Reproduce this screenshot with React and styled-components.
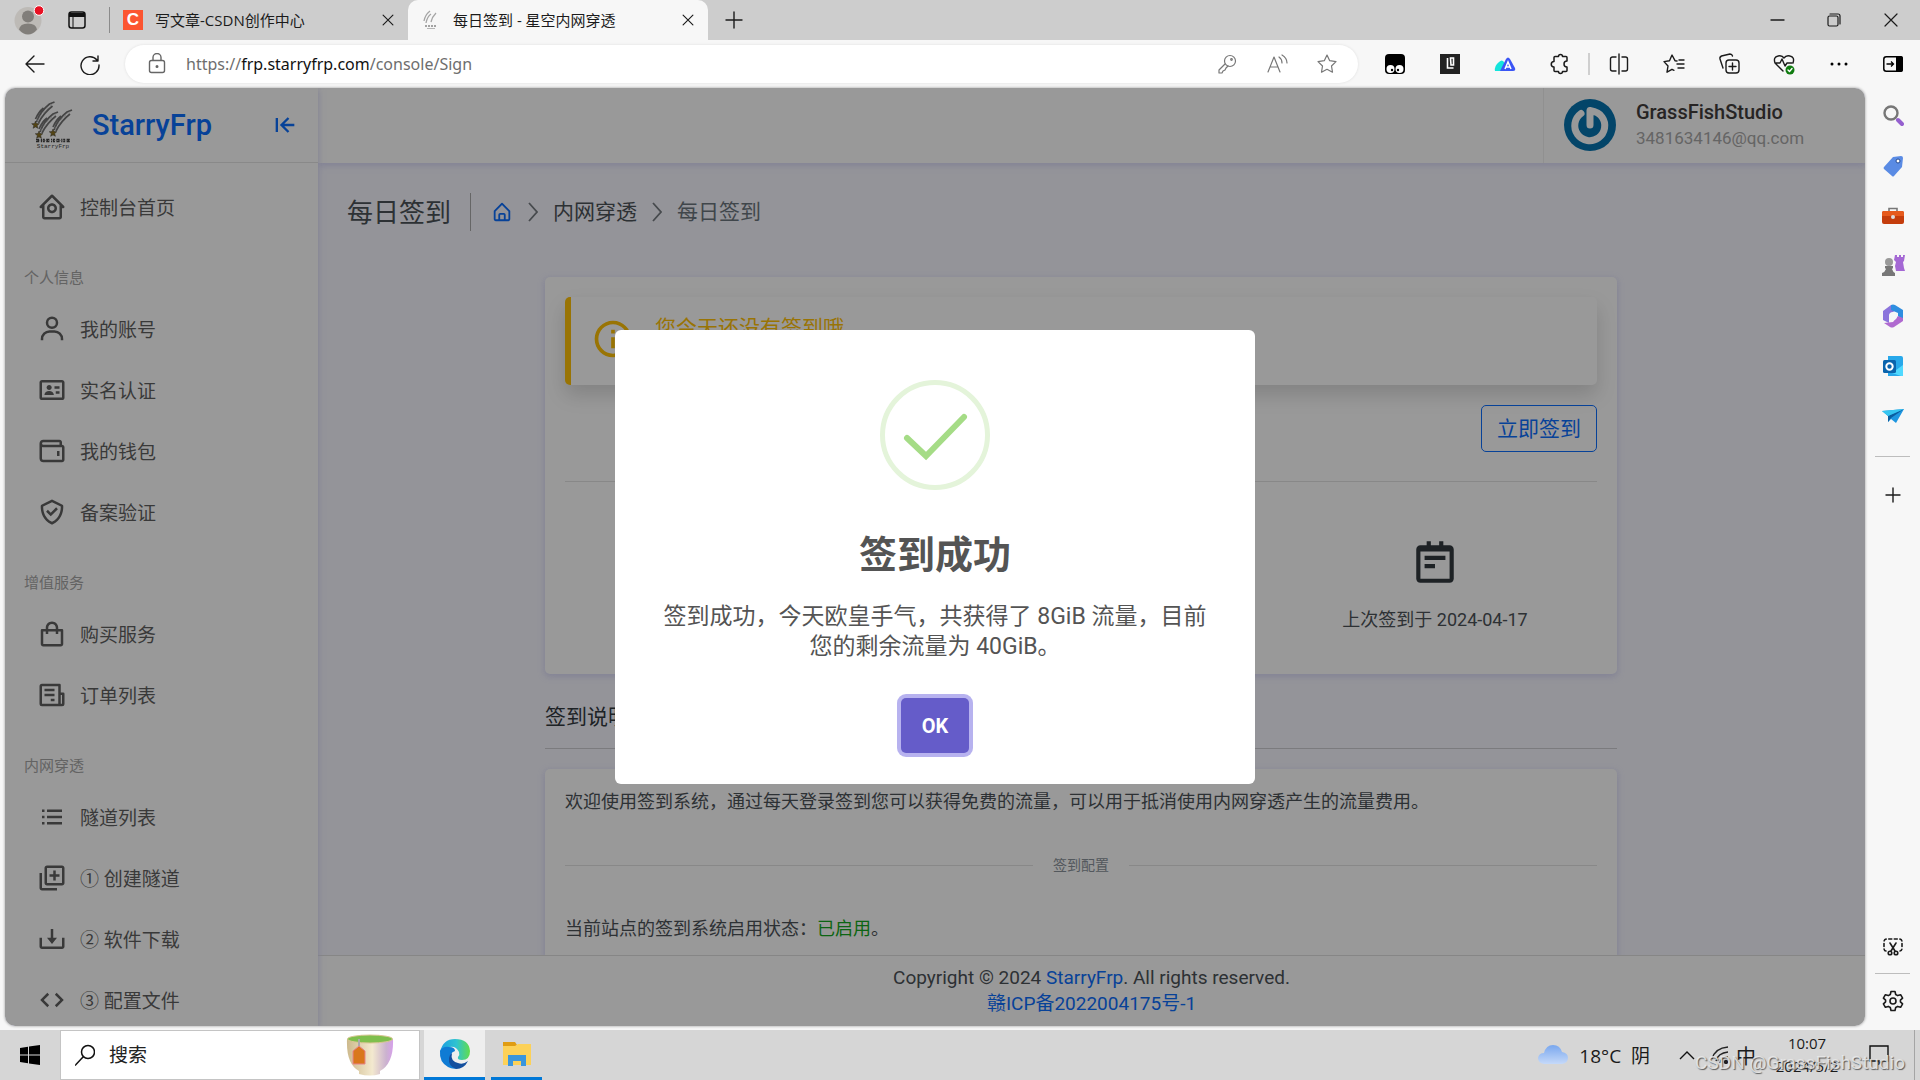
import React from "react";
import styled, { createGlobalStyle, css } from "styled-components";
import {
  BiHomeCircle, BiUser, BiIdCard, BiWallet, BiCheckShield, BiShoppingBag, BiListUl,
  BiAddToQueue, BiDownload, BiCode, BiArrowToLeft, BiHomeAlt, BiInfoCircle, BiNotepad,
} from "react-icons/bi";

const siteFont = '"Roboto", "Noto Sans CJK SC", sans-serif';
const chromeFont = '"Open Sans", "Noto Sans CJK SC", sans-serif';
const violetShadow = "0 2px 6px 0 rgba(218, 218, 253, 0.65), 0 2px 6px 0 rgba(206, 206, 238, 0.54)";

const GlobalStyle = createGlobalStyle`
  *, *::before, *::after { box-sizing: border-box; }
  body { margin: 0; font-family: ${chromeFont}; color: #1b1b1b; }
  button, input { font: inherit; color: inherit; }
  button { background: none; border: 0; padding: 0; }
  a { color: inherit; text-decoration: none; }
  h1, h2, p, ul { margin: 0; padding: 0; font-weight: 400; }
  ul { list-style: none; }
  svg { display: block; flex: none; }
`;

/* ---------- window frame ---------- */
const Screen = styled.div`
  display: flex;
  flex-direction: column;
  height: 100vh;
  overflow: hidden;
  background: #f7f7f7;
`;
const TabStrip = styled.header`
  display: flex;
  align-items: center;
  height: 40px;
  flex: none;
  background: #cdcdcd;
`;
const StripTools = styled.div`
  display: flex;
  align-items: center;
  width: 110px;
  height: 26px;
  padding-left: 14px;
  gap: 22px;
  border-right: 1px solid #8b8b8b;
`;
const IconButton = styled.button`
  display: flex;
  align-items: center;
  justify-content: center;
  width: ${(p) => p.$w || 55}px;
  height: 40px;
  flex: none;
  color: ${(p) => p.$color || "#1b1b1b"};
`;
const Tab = styled.div`
  display: flex;
  align-items: center;
  width: ${(p) => (p.$active ? 300 : 298)}px;
  height: 40px;
  padding: 0 12px 0 13px;
  gap: 12px;
  font-size: 15px;
  border-radius: 10px 10px 0 0;
  background: ${(p) => (p.$active ? "#f7f7f7" : "transparent")};
`;
const TabTitle = styled.span`
  flex: 1;
  padding-bottom: 2px;
  white-space: nowrap;
  overflow: hidden;
`;
const CsdnBadge = styled.span`
  width: 20px;
  height: 20px;
  background: #fc5531;
  color: #fff;
  font: 700 17px/20px "Liberation Sans", sans-serif;
  text-align: center;
`;
const Spacer = styled.div`
  flex: 1;
`;
const Toolbar = styled.div`
  display: flex;
  align-items: center;
  height: 48px;
  flex: none;
  padding-left: 7px;
`;
const AddressBar = styled.div`
  display: flex;
  align-items: center;
  flex: 1;
  height: 38px;
  margin: 0 9px 0 8px;
  padding: 0 6px 0 7px;
  border-radius: 19px;
  background: #fff;
  box-shadow: 0 0 3px rgba(0, 0, 0, 0.1);
`;
const UrlField = styled.label`
  display: grid;
  align-items: center;
  flex: 1;
  padding-left: 4px;
  font: 16px/24px "Noto Sans", "Noto Sans CJK SC", sans-serif;
  color: #6e6e6e;
  & > * { grid-area: 1 / 1; }
  b { font-weight: 400; color: #111; }
`;
const UrlInput = styled.input`
  width: 100%;
  border: 0;
  outline: 0;
  padding: 0;
  background: none;
`;
const ToolDivider = styled.span`
  width: 2px;
  height: 22px;
  margin: 0 1px;
  background: #cfcfcf;
`;
const Body = styled.div`
  display: flex;
  flex: 1;
  min-height: 0;
  padding: 0 0 4px 5px;
`;
const EdgeRail = styled.aside`
  display: flex;
  flex-direction: column;
  align-items: center;
  width: 55px;
  flex: none;
  padding: 3px 0 0;
`;
const RailButton = styled(IconButton)`
  height: 50px;
`;
const RailRule = styled.span`
  width: 35px;
  height: 1px;
  background: #bdbdbd;
  margin: ${(p) => (p.$top ? "15px 0 13px" : "2px 0")};
`;

/* ---------- web page ---------- */
const Page = styled.div`
  position: relative;
  display: flex;
  flex: 1;
  min-width: 0;
  border-radius: 10px;
  overflow: hidden;
  background: #f7f7ff;
  box-shadow: 0 0 3px rgba(0, 0, 0, 0.4);
  font-family: ${siteFont};
  color: #4c5258;
`;
const SideShell = styled.div`
  display: flex;
  flex: none;
  background: #fff;
  box-shadow: ${violetShadow};
  z-index: 2;
`;
const SideNav = styled.nav`
  width: 313px;
  overflow: hidden;
`;
const Brand = styled.div`
  display: flex;
  align-items: center;
  height: 75px;
  padding: 0 19px 0 26px;
  border-bottom: 1px solid #e4e4e4;
  color: #0d6efd;
`;
const BrandName = styled.span`
  flex: 1;
  margin-left: 17px;
  font-size: 29px;
  font-weight: 500;
`;
const NavList = styled.ul`
  padding-top: 13px;
`;
const NavLink = styled.a`
  display: flex;
  align-items: center;
  gap: 13px;
  height: 61px;
  padding-left: 32px;
  font-size: 19px;
  color: #5f5f5f;
  white-space: nowrap;
`;
const NavLabel = styled.li`
  height: 61px;
  padding: 22px 0 0 19px;
  font-size: 15px;
  line-height: 39px;
  color: #a6a6a6;
`;
const Main = styled.main`
  display: flex;
  flex-direction: column;
  flex: 1;
  min-width: 0;
`;
const TopBar = styled.div`
  display: flex;
  justify-content: flex-end;
  height: 75px;
  flex: none;
  background: #fff;
  box-shadow: ${violetShadow};
  z-index: 1;
`;
const UserBox = styled.div`
  display: flex;
  align-items: center;
  width: 322px;
  padding: 0 0 2px 20px;
  gap: 20px;
  border-left: 1px solid #f0f0f0;
  line-height: 26px;
`;
const UserName = styled.div`
  font-size: 20px;
  font-weight: 500;
  color: #413c3c;
`;
const UserMail = styled.div`
  font-size: 17px;
  color: #a9a8a8;
`;
const Content = styled.div`
  flex: 1;
  min-height: 0;
  overflow: hidden;
  padding: 30px 50px 0 29px;
`;
const Crumbs = styled.div`
  display: flex;
  align-items: center;
  height: 38px;
  gap: 15px;
  font-size: 21px;
  color: #6c757d;
`;
const PageTitle = styled.h1`
  display: flex;
  align-items: center;
  height: 38px;
  padding: 0 19px 4px 0;
  margin-right: 5px;
  border-right: 1px solid #aaaaaa;
  font-size: 26px;
  color: #4c5258;
`;
const CrumbText = styled.span`
  padding-bottom: 4px;
`;
const CrumbLink = styled.a`
  color: ${(p) => (p.$home ? "#0d6efd" : "#4c5258")};
`;
const Column = styled.div`
  max-width: 1072px;
  margin: 46px auto 0;
`;
const Card = styled.section`
  padding: 20px;
  border-radius: 5px;
  background: #fff;
  box-shadow: ${violetShadow};
  font-size: 18px;
  line-height: 26px;
`;
const Alert = styled.div`
  display: flex;
  align-items: center;
  gap: 20px;
  height: 88px;
  padding: 16px 20px 20px;
  border-left: 6px solid #ffc107;
  border-radius: 5px;
  background: #fff;
  box-shadow: 0 10px 20px rgba(0, 0, 0, 0.15);
  color: #ffc107;
`;
const AlertText = styled.p`
  align-self: flex-start;
  padding-top: 2px;
  font-size: 21px;
`;
const Actions = styled.div`
  display: flex;
  justify-content: flex-end;
  padding: 20px 0 29px;
  border-bottom: 1px solid #e3e3e3;
`;
const SignButton = styled.button`
  padding: 11px 15px 9px;
  border: 1px solid #0d6efd;
  border-radius: 5px;
  font-size: 21px;
  line-height: 25px;
  color: #0d6efd;
`;
const Stats = styled.div`
  display: grid;
  grid-template-columns: repeat(3, 1fr);
  gap: 30px;
  padding: 55px 0 21px;
`;
const Stat = styled.div`
  grid-column: 3;
  display: flex;
  flex-direction: column;
  align-items: center;
  gap: 20px;
  svg { color: #32393f; }
`;
const SectionTitle = styled.h2`
  margin: 31px 0 20px;
  padding-bottom: 19px;
  border-bottom: 1px solid #cdcdd2;
  font-size: 21px;
  line-height: 24px;
  color: #32393f;
`;
const Divider = styled.div`
  display: flex;
  align-items: center;
  gap: 20px;
  margin: 37px 0 38px;
  font-size: 14px;
  color: #8b939b;
  &::before, &::after {
    content: "";
    flex: 1;
    height: 1px;
    background: #e3e3e3;
  }
`;
const Success = styled.span`
  color: #15a820;
`;
const Footer = styled.footer`
  flex: none;
  padding: 9px;
  border-top: 1px solid #e0e0e0;
  background: #fff;
  text-align: center;
  font-size: 19px;
  line-height: 26px;
  a { color: #0d6efd; }
`;

/* ---------- dialog ---------- */
const Backdrop = styled.div`
  position: absolute;
  inset: 0;
  z-index: 5;
  display: flex;
  align-items: center;
  justify-content: center;
  background: rgba(0, 0, 0, 0.4);
`;
const Dialog = styled.div`
  display: flex;
  flex-direction: column;
  align-items: center;
  width: 640px;
  padding: 50px 40px 31px;
  border-radius: 6px;
  background: #fff;
  color: #545454;
  text-align: center;
`;
const DialogTitle = styled.h2`
  margin: 40px 0 22px;
  font-size: 38px;
  line-height: 50px;
  font-weight: 700;
`;
const DialogText = styled.p`
  font-size: 23px;
  line-height: 30px;
`;
const OkButton = styled.button`
  height: 55px;
  margin-top: 36px;
  padding: 0 21px;
  border-radius: 5px;
  background: #655cc9;
  box-shadow: 0 0 0 4px rgba(112, 102, 224, 0.5);
  color: #fff;
  font-size: 20px;
  font-weight: 700;
`;

/* ---------- taskbar ---------- */
const Taskbar = styled.footer`
  position: relative;
  display: flex;
  align-items: center;
  height: 50px;
  flex: none;
  background: #d6d6d6;
`;
const StartButton = styled(IconButton)`
  width: 60px;
  height: 50px;
`;
const SearchBox = styled.label`
  display: flex;
  align-items: center;
  gap: 14px;
  width: 360px;
  height: 50px;
  padding: 0 25px 0 14px;
  margin-right: 4px;
  border: 1px solid #c4c4c4;
  background: #fff;
`;
const SearchInput = styled.input`
  flex: 1;
  min-width: 0;
  border: 0;
  outline: 0;
  padding: 0;
  font-size: 19px;
  &::placeholder { color: #222; opacity: 1; }
`;
const TaskButton = styled.button`
  display: flex;
  align-items: center;
  justify-content: center;
  width: ${(p) => (p.$active ? 61 : 51)}px;
  height: 50px;
  margin-right: 6px;
  border-bottom: 3px solid #0078d7;
  ${(p) => p.$active && css`background: #eeeeee;`}
`;
const Weather = styled.div`
  display: flex;
  align-items: center;
  gap: 11px;
  margin-right: 29px;
  font-size: 19px;
  white-space: pre;
`;
const Tray = styled.div`
  display: flex;
  align-items: center;
  gap: ${(p) => (p.$tight ? 7 : 16)}px;
  font-size: 20px;
`;
const Clock = styled.div`
  width: 78px;
  margin: 0 23px 0 12px;
  text-align: center;
  font-size: 15px;
  line-height: 23px;
`;
const Notice = styled.div`
  display: flex;
  align-items: center;
  height: 50px;
  width: 46px;
  margin-right: 5px;
  border-right: 1px solid #a5a5a5;
`;
const Watermark = styled.span`
  position: absolute;
  right: 15px;
  bottom: 5px;
  font: 19px/24px "Roboto", sans-serif;
  color: rgba(235, 235, 235, 0.85);
  text-shadow: 1px 1px 1px rgba(70, 70, 70, 0.85);
`;

/* ---------- drawings ---------- */
const Line = ({ size = 22, w = 1.4, children, ...rest }) => (
  <svg width={size} height={size} viewBox="0 0 22 22" fill="none" stroke="currentColor" strokeWidth={w}
    strokeLinecap="round" strokeLinejoin="round" aria-hidden="true" {...rest}>{children}</svg>
);
const Cross = ({ size = 22 }) => <Line size={size}><path d="M5 5l12 12M17 5L5 17" /></Line>;

const Meteor = ({ x, y }) => (
  <g transform={`translate(${x} ${y})`}>
    <path d="M1-3Q5-14 14-21L19-23M3-2Q8-12 17-19M0-6Q3-13 8-17" fill="none" stroke="#747474" strokeWidth="1.7" />
    <path d="M2-4Q7-14 18-22" fill="none" stroke="#c9c9c9" strokeWidth=".8" strokeDasharray="3 2" />
    <path d="M0-4l1 2.500 2.800.2-2.100 1.900.7 2.700L0 1.900-2.400 3.300l.7-2.700-2.100-1.900 2.800-.2z" fill="#8a7222" stroke="#444" strokeWidth=".5" />
  </g>
);
const StarryLogo = () => (
  <svg width="44" height="54" viewBox="0 0 44 54" role="img" aria-label="StarryFrp">
    <Meteor x={4.5} y={27} />
    <Meteor x={8} y={37} />
    <Meteor x={22} y={35} />
    <path d="M5 42.500h34" stroke="#444" strokeWidth="3.600" strokeDasharray="3.200 1.600 1.200 .8 2 1.400" />
    <path d="M5 42.500h34" stroke="#bbb" strokeWidth=".8" strokeDasharray="1.500 1.500" />
    <text x="22" y="50" textAnchor="middle" fontSize="6" fontFamily="Liberation Mono" fill="#444">StarryFrp</text>
  </svg>
);
const MiniLogo = () => (
  <svg width="20" height="20" viewBox="0 0 20 20" aria-hidden="true">
    <g fill="none" stroke="#a5a5a5" strokeWidth="1.300">
      <path d="M3 11Q4 5 9 1M5 13Q6 7 10 4M10 12Q11 7 15 3" />
      <path d="M4 16h12" stroke="#888" strokeDasharray="2 1" /><path d="M6 18.500h8" strokeWidth=".8" />
    </g>
  </svg>
);
const NewsIcon = ({ size }) => (
  <svg width={size} height={size} viewBox="0 0 24 24" fill="none" stroke="currentColor" strokeWidth="2" aria-hidden="true">
    <path d="M18 20V4H4q-1 0-1 1v14q0 1 1 1h16q1 0 1-1v-8h-3" strokeLinejoin="round" />
    <path d="M6 8h8M6 12h8M11 16h3" />
  </svg>
);
const Profile = () => (
  <svg width="32" height="30" viewBox="0 0 32 30" aria-hidden="true">
    <circle cx="14" cy="15.500" r="13.500" fill="#bdbab6" />
    <circle cx="14" cy="11.500" r="6" fill="#817e7a" />
    <path d="M5 24.500q1-6 9-6t9 6q-4 5-9 5t-9-5z" fill="#817e7a" />
    <circle cx="25" cy="5.500" r="4.800" fill="#e81123" stroke="#fff" strokeWidth="1" />
  </svg>
);
const Avatar = () => (
  <svg width="52" height="52" viewBox="0 0 52 52" role="img" aria-label="GrassFishStudio">
    <circle cx="26" cy="26" r="26" fill="#0674b0" />
    <path d="M17 14.500A15 15 0 1 0 38 18Q35 13 26 11.500V26" fill="none" stroke="#fff" strokeWidth="7" strokeLinecap="round" strokeLinejoin="round" />
  </svg>
);
const Puzzle = () => <Line w={1.5}><path d="M6 3.500h3.500a2 2 0 0 1 4 0H17q1 0 1 1V8a2.300 2.300 0 0 0 0 6v3.500q0 1-1 1h-3.500a2 2 0 0 1-4 0H6q-1 0-1-1V14a2.500 2.500 0 0 1 0-5.500V4.500q0-1 1-1z" /></Line>;
const STAR = "M11 2l2.700 5.700 6.300.9-4.500 4.400 1 6.200L11 16.300 5.500 19.200l1-6.200L2 8.600l6.300-.9z";

const extensions = [
  ["篡改猴", <svg width="20" height="20" viewBox="0 0 20 20"><rect width="20" height="20" rx="4" fill="#000" /><circle cx="5.500" cy="15" r="4" fill="#fff" /><circle cx="14.500" cy="15" r="4" fill="#fff" /><circle cx="7" cy="16" r="1.200" /><circle cx="13" cy="16" r="1.200" /></svg>],
  ["扩展 L", <svg width="20" height="20" viewBox="0 0 20 20"><rect width="20" height="20" fill="#222" /><path d="M7.500 4v10h6M10.500 4h3v7h-2.500z" fill="none" stroke="#fff" strokeWidth="1.600" /></svg>],
  ["翻译", <svg width="22" height="22" viewBox="0 0 22 22"><path d="M1 18Q0 13 5 9q3-3 5 0v9z" fill="#14e4dc" /><path d="M6 18l6-12q2-3 4 0l5 9q1 3-2 3z" fill="#3b55f5" /><path d="M11 16l3-7 3 7M12 14h4" fill="none" stroke="#fff" strokeWidth="1.500" /></svg>],
  ["扩展", <Puzzle />],
];
const tools = [
  ["分屏", <Line><path d="M11 1v20M8 4H4.500A2 2 0 0 0 2.500 6v10a2 2 0 0 0 2 2H8M14 4h3.500a2 2 0 0 1 2 2v10a2 2 0 0 1-2 2H14" /></Line>],
  ["收藏夹", <Line><path d="M14 8l-2-.3L9 2 6.500 7.700 1 8.600l4 4.400-1 6.200 5-2.900 2 1M14 11h7M15 15h6M16 7h5" /></Line>],
  ["集锦", <Line><rect x="8" y="7" width="13" height="13" rx="3" /><path d="M14.500 10v7M11 13.500h7M5 15L2 6q-.5-2 1.500-3L12 1q2 0 2.500 2" /></Line>],
  ["浏览器健康", <Line><path d="M10 18L2 10Q0 4 5 3q4-1 6 2 2-3 6-2 5 1 3 7M3 10h4l2-4 3 7 2-3h5" /><circle cx="17" cy="17" r="4.500" fill="#107c10" stroke="none" /><path d="M15 17l1.500 1.500L19 15.500" stroke="#fff" /></Line>],
  ["更多", <svg width="22" height="22" viewBox="0 0 22 22"><circle cx="4" cy="11" r="1.500" /><circle cx="11" cy="11" r="1.500" /><circle cx="18" cy="11" r="1.500" /></svg>],
];
const rail = [
  ["搜索", <Line w={2.400}><circle cx="9" cy="8" r="6.500" stroke="#777" /><path d="M16 15l4 4" stroke="#9560cf" strokeWidth="4" /></Line>],
  ["购物", <svg width="22" height="22" viewBox="0 0 22 22"><path d="M11 2l8-1q2 0 2 2l-1 9-8 9q-1 1-2 0l-8-7q-1-1 0-2z" fill="#5a8be4" /><circle cx="16" cy="6" r="2" fill="#fff" stroke="#254a91" /></svg>],
  ["工具", <svg width="24" height="22" viewBox="0 0 24 22"><path d="M8 7V3.500h8V7" fill="none" stroke="#777" strokeWidth="1.600" /><rect x="1" y="6" width="22" height="13" rx="2" fill="#c43d0c" /><path d="M1 8q0-2 2-2h18q2 0 2 2v3H1z" fill="#e65a1c" /><circle cx="12" cy="12" r="2" fill="#ddd" /></svg>],
  ["游戏", <svg width="24" height="24" viewBox="0 0 24 24"><circle cx="8" cy="8" r="4" fill="#999" /><path d="M4 12h8v2l-1 1q1 3 3 4v3H1v-3q3-1 4-4l-1-1z" fill="#777" /><path d="M14 1h2v2h2V1h2v2h2V1h2l-1 6-1 1 1 6 1 3h-9l-1-5 1-4-2-2z" fill="#a468d4" /></svg>],
  ["Microsoft 365", <svg width="22" height="24" viewBox="0 0 22 24"><path d="M1 7L9 1l8 3-6 4-4 3v8l-6-3z" fill="#8b74dc" /><path d="M9 1q2-1 4 0l8 5v10l-5-4V9L9 6z" fill="#2f8ee0" /><path d="M21 14v3l-9 6q-2 1-4 0l-6-4 9-1 5-6z" fill="#b06ad0" /><circle cx="11" cy="12" r="4" fill="#f7f7f7" /></svg>],
  ["Outlook", <svg width="22" height="22" viewBox="0 0 22 22"><path d="M6 1h13q2 0 2 2v16q0 2-2 2H6z" fill="#28a8ea" /><path d="M21 10l-11 8 9 3h2z" fill="#50d9ff" /><rect x="1" y="5" width="13" height="13" rx="1.500" fill="#0a64ad" /><circle cx="7.500" cy="11.500" r="3.200" fill="none" stroke="#fff" strokeWidth="2" /></svg>],
  ["Drop", <svg width="22" height="22" viewBox="0 0 22 22"><path d="M0 6l22-2-8 14-5-4-3 3v-6z" fill="#1e96e0" /><path d="M22 4L6 11v6l3-4z" fill="#0b5d9f" /><path d="M0 6l22-2L6 11z" fill="#36c5f0" /></svg>],
];

const nav = [
  { icon: BiHomeCircle, text: "控制台首页" },
  { label: "个人信息" },
  { icon: BiUser, text: "我的账号" },
  { icon: BiIdCard, text: "实名认证" },
  { icon: BiWallet, text: "我的钱包" },
  { icon: BiCheckShield, text: "备案验证" },
  { label: "增值服务" },
  { icon: BiShoppingBag, text: "购买服务" },
  { icon: NewsIcon, text: "订单列表" },
  { label: "内网穿透" },
  { icon: BiListUl, text: "隧道列表" },
  { icon: BiAddToQueue, text: "① 创建隧道" },
  { icon: BiDownload, text: "② 软件下载" },
  { icon: BiCode, text: "③ 配置文件" },
];

const Chevron = () => (
  <svg width="10" height="20" viewBox="0 0 10 20" fill="none" stroke="#777c82" strokeWidth="1.800" aria-hidden="true"><path d="M1 1l8 9-8 9" /></svg>
);

function BrowserChrome() {
  return (
    <>
      <TabStrip>
        <StripTools>
          <Profile />
          <svg width="18" height="18" viewBox="0 0 18 18" aria-hidden="true"><rect x="1" y="1" width="16" height="16" rx="2.500" fill="none" stroke="#111" strokeWidth="1.500" /><path d="M1 2h16v4H1z" fill="#111" /><path d="M5 6v11" stroke="#111" /></svg>
        </StripTools>
        <Tab>
          <CsdnBadge>C</CsdnBadge>
          <TabTitle>写文章-CSDN创作中心</TabTitle>
          <IconButton $w={16} aria-label="关闭标签页"><Cross size={18} /></IconButton>
        </Tab>
        <Tab $active>
          <MiniLogo />
          <TabTitle>每日签到 - 星空内网穿透</TabTitle>
          <IconButton $w={16} aria-label="关闭标签页"><Cross size={18} /></IconButton>
        </Tab>
        <IconButton $w={52} aria-label="新建标签页"><Line><path d="M11 3v16M3 11h16" /></Line></IconButton>
        <Spacer />
        <IconButton $w={57} aria-label="最小化"><Line><path d="M4 11h13" /></Line></IconButton>
        <IconButton $w={57} aria-label="还原"><Line w={1.2}><rect x="4" y="7" width="10" height="10" rx="1.500" /><path d="M6 5h8q2 0 2 2v8" /></Line></IconButton>
        <IconButton $w={57} aria-label="关闭"><Line w={1.2}><path d="M4 5l12 12M16 5L4 17" /></Line></IconButton>
      </TabStrip>
      <Toolbar>
        <IconButton aria-label="后退"><Line><path d="M20 11H2M10 3l-8 8 8 8" /></Line></IconButton>
        <IconButton aria-label="刷新"><Line><path d="M19 3v5h-5M18 7a9 9 0 1 0 2 5" /></Line></IconButton>
        <AddressBar>
          <IconButton $w={50} $color="#666" aria-label="网站信息"><Line w={1.4}><rect x="3.500" y="7.500" width="15" height="12" rx="2" /><path d="M7 7V4.500a4 4 0 0 1 8 0V7" /><circle cx="11" cy="13.500" r=".8" fill="currentColor" /></Line></IconButton>
          <UrlField>
            <UrlInput aria-label="地址栏" />
            <span>https://<b>frp.starryfrp.com</b>/console/Sign</span>
          </UrlField>
          <IconButton $w={50} $color="#777" aria-label="密码"><Line w={1.2}><circle cx="14" cy="8" r="5.500" /><circle cx="15.500" cy="6.500" r=".8" /><path d="M9 11l-6 6v3h3l1-2 2-1 1-2 2-2" /></Line></IconButton>
          <IconButton $w={50} $color="#777" aria-label="朗读"><Line w={1.2}><path d="M2 19L8 4l6 15M4 14h8M13 4q3 2 3 6M16 2q5 3 5 8" /></Line></IconButton>
          <IconButton $w={50} $color="#777" aria-label="收藏"><Line w={1.2}><path d={STAR} /></Line></IconButton>
        </AddressBar>
        {extensions.map(([name, icon]) => <IconButton key={name} aria-label={name}>{icon}</IconButton>)}
        <ToolDivider />
        {tools.map(([name, icon]) => <IconButton key={name} aria-label={name}>{icon}</IconButton>)}
        <IconButton $w={54} aria-label="侧栏"><svg width="20" height="16" viewBox="0 0 20 16"><rect x=".8" y=".8" width="18.400" height="14.400" rx="2.500" fill="none" stroke="#000" strokeWidth="1.500" /><path d="M13 0h5q2 0 2 2v12q0 2-2 2h-5z" /><path d="M3.500 8h7M8 5.500L10.500 8 8 10.500" fill="none" stroke="#000" strokeWidth="1.300" /></svg></IconButton>
      </Toolbar>
    </>
  );
}

function SignDialog() {
  return (
    <Backdrop>
      <Dialog role="dialog" aria-modal="true" aria-labelledby="sign-title">
        <svg width="110" height="110" viewBox="0 0 110 110" fill="none" aria-hidden="true">
          <circle cx="55" cy="55" r="52.500" stroke="#e4f4da" strokeWidth="5" />
          <path d="M27 58l19 18 38-39" stroke="#a5dc86" strokeWidth="6" strokeLinecap="round" />
        </svg>
        <DialogTitle id="sign-title">签到成功</DialogTitle>
        <DialogText>签到成功，今天欧皇手气，共获得了 8GiB 流量，目前您的剩余流量为 40GiB。</DialogText>
        <OkButton>OK</OkButton>
      </Dialog>
    </Backdrop>
  );
}

function Site() {
  return (
    <Page>
      <SideShell>
        <SideNav>
          <Brand>
            <StarryLogo />
            <BrandName>StarryFrp</BrandName>
            <BiArrowToLeft size={28} />
          </Brand>
          <NavList>
            {nav.map(({ icon: Icon, text, label }) =>
              label ? <NavLabel key={label}>{label}</NavLabel> : (
                <li key={text}><NavLink href="#"><Icon size={30} />{text}</NavLink></li>
              ))}
          </NavList>
        </SideNav>
      </SideShell>
      <Main>
        <TopBar>
          <UserBox>
            <Avatar />
            <div>
              <UserName>GrassFishStudio</UserName>
              <UserMail>3481634146@qq.com</UserMail>
            </div>
          </UserBox>
        </TopBar>
        <Content>
          <Crumbs>
            <PageTitle>每日签到</PageTitle>
            <CrumbLink href="#" $home aria-label="首页"><BiHomeAlt size={22} /></CrumbLink>
            <Chevron />
            <CrumbText><CrumbLink href="#">内网穿透</CrumbLink></CrumbText>
            <Chevron />
            <CrumbText>每日签到</CrumbText>
          </Crumbs>
          <Column>
            <Card>
              <Alert>
                <BiInfoCircle size={44} />
                <AlertText>您今天还没有签到哦</AlertText>
              </Alert>
              <Actions><SignButton>立即签到</SignButton></Actions>
              <Stats>
                <Stat>
                  <BiNotepad size={50} />
                  <p>上次签到于 2024-04-17</p>
                </Stat>
              </Stats>
            </Card>
            <SectionTitle>签到说明</SectionTitle>
            <Card>
              <p>欢迎使用签到系统，通过每天登录签到您可以获得免费的流量，可以用于抵消使用内网穿透产生的流量费用。</p>
              <Divider>签到配置</Divider>
              <p>当前站点的签到系统启用状态：<Success>已启用</Success>。</p>
            </Card>
          </Column>
        </Content>
        <Footer>
          <p>Copyright © 2024 <a href="#">StarryFrp</a>. All rights reserved.</p>
          <p><a href="#">赣ICP备2022004175号-1</a></p>
        </Footer>
      </Main>
      <SignDialog />
    </Page>
  );
}

function SystemBar() {
  return (
    <Taskbar>
      <StartButton aria-label="开始"><svg width="20" height="20" viewBox="0 0 20 20"><path d="M0 3l8-1.200v7.700H0zM9 1.600L20 0v9.500H9zM0 10.500h8v7.700L0 17zM9 10.500h11V20L9 18.400z" /></svg></StartButton>
      <SearchBox>
        <svg width="20" height="22" viewBox="0 0 20 22" fill="none" stroke="#111" strokeWidth="1.500" aria-hidden="true"><circle cx="13" cy="8" r="6.500" /><path d="M8.500 12.500L0 21.500" /></svg>
        <SearchInput placeholder="搜索" aria-label="搜索" />
        <svg width="48" height="42" viewBox="0 0 48 42" aria-hidden="true">
          <defs><linearGradient id="bowl"><stop stopColor="#cdb98c" /><stop offset=".55" stopColor="#f3e9cf" /><stop offset=".85" stopColor="#cbb2cf" /><stop offset="1" stopColor="#d6a0ea" /></linearGradient></defs>
          <path d="M1 5h46q1 24-13 32v3q-10 3-21 0v-3Q0 30 1 5z" fill="url(#bowl)" />
          <ellipse cx="24" cy="5" rx="22.500" ry="4" fill="#7fbf4d" stroke="#d9c694" />
          <path d="M13 5v8" stroke="#aaa" strokeWidth="2" /><path d="M7 17l6-5 6 5v13H7z" fill="#d9771c" stroke="#e7838a" />
        </svg>
      </SearchBox>
      <TaskButton $active aria-label="Microsoft Edge">
        <svg width="32" height="32" viewBox="0 0 32 32">
          <defs><linearGradient id="edge"><stop stopColor="#1b9de2" /><stop offset=".55" stopColor="#2fc3d0" /><stop offset="1" stopColor="#62dd4b" /></linearGradient></defs>
          <path d="M1 14Q4 1 16 1q14 0 15 12 0 9-8 9-5 0-4-3 2-2 1-5-3-6-9-5-7 1-10 5z" fill="url(#edge)" />
          <path d="M1 13q3-5 9-4 6 0 6 4-6 2-4 9 2 5 8 8-6 2-11-1Q0 24 1 13z" fill="#0f7bd4" />
          <path d="M13 15q-2 8 6 10 5 2 10-2-4 8-12 8Q9 28 10 20q0-3 3-5z" fill="#134f9e" />
        </svg>
      </TaskButton>
      <TaskButton aria-label="文件资源管理器">
        <svg width="28" height="26" viewBox="0 0 28 26"><path d="M0 1h12l2 3-2 2H0z" fill="#e09c12" /><path d="M0 5h12l3-2h13v21H0z" fill="#fcd158" /><path d="M5 25V14h18v11h-5v-5h-8v5z" fill="#3a96dd" /></svg>
      </TaskButton>
      <Spacer />
      <Weather>
        <svg width="30" height="20" viewBox="0 0 30 20" aria-hidden="true"><defs><linearGradient id="cloud" x2="0" y2="1"><stop stopColor="#79a7ee" /><stop offset="1" stopColor="#c5d9f9" /></linearGradient></defs><path d="M6 19q-6-1-6-6 1-5 6-5 2-8 9-8t9 7q6 1 6 6t-6 6z" fill="url(#cloud)" /></svg>
        <span>18°C  阴</span>
      </Weather>
      <Tray>
        <svg width="16" height="10" viewBox="0 0 16 10" fill="none" stroke="#111" strokeWidth="1.400" aria-hidden="true"><path d="M1 9l7-7 7 7" /></svg>
        <Tray $tight>
          <svg width="18" height="18" viewBox="0 0 18 18" fill="none" stroke="#222" strokeWidth="1.300" aria-hidden="true"><path d="M1 13Q4 2 17 1M5 15Q7 7 17 6M9 17q1-6 8-6" /><circle cx="15" cy="16" r="1.500" fill="#222" /></svg>
          <span>中</span>
        </Tray>
      </Tray>
      <Clock><div>10:07</div><div>2024/5/2</div></Clock>
      <Notice><svg width="20" height="20" viewBox="0 0 20 20" fill="none" stroke="#111" strokeWidth="1.400" aria-hidden="true"><path d="M1 1h18v15h-6l-3 3v-3H1z" /></svg></Notice>
      <Watermark>CSDN @GrassFishStudio</Watermark>
    </Taskbar>
  );
}

export default function App() {
  return (
    <Screen>
      <GlobalStyle />
      <BrowserChrome />
      <Body>
        <Site />
        <EdgeRail>
          {rail.map(([name, icon]) => <RailButton key={name} aria-label={name}>{icon}</RailButton>)}
          <RailRule $top />
          <RailButton aria-label="自定义"><Line><path d="M11 4v14M4 11h14" /></Line></RailButton>
          <Spacer />
          <RailButton aria-label="截图"><Line w={1.6}><path d="M4 16Q2 16 2 13V7q0-3 3-3h12q3 0 3 3v6q0 3-2 3" strokeDasharray="3 2.500" /><path d="M8 8l5 8M14 8l-5 8" /><circle cx="8" cy="18" r="1.800" /><circle cx="14" cy="18" r="1.800" /></Line></RailButton>
          <RailRule />
          <RailButton aria-label="设置"><Line w={1.6}><circle cx="11" cy="11" r="3" /><path d="M9 1.500h4l.7 3 2 1.100 2.900-.9 2 3.400-2.200 2.100v1.600l2.200 2.100-2 3.400-2.900-.9-2 1.100-.7 3H9l-.7-3-2-1.100-2.900.9-2-3.400 2.200-2.100v-1.600L1.400 8.100l2-3.400 2.900.9 2-1.100z" /></Line></RailButton>
        </EdgeRail>
      </Body>
      <SystemBar />
    </Screen>
  );
}
